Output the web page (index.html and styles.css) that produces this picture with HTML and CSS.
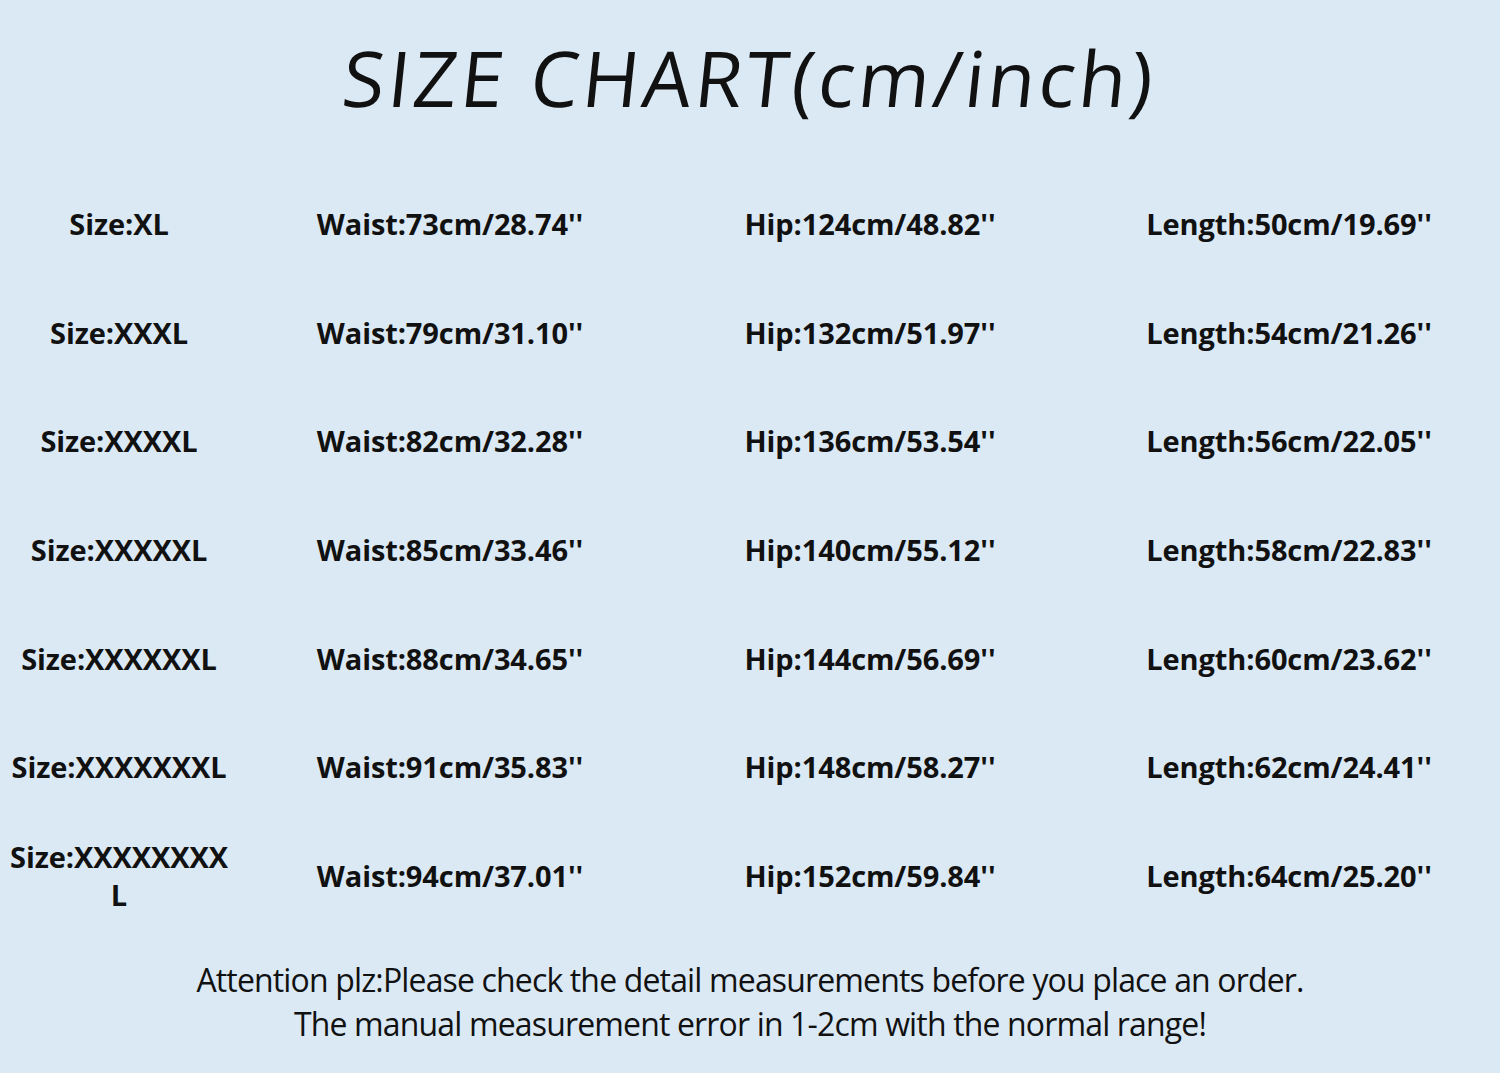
FILE: index.html
```html
<!DOCTYPE html>
<html>
<head>
<meta charset="utf-8">
<link rel="stylesheet" href="styles.css">
</head>
<body>
<div class="page">
  <h1 class="title"><span class="title-text">SIZE CHART(cm/inch)</span></h1>
  <div class="chart">
    <div class="cell size">Size:XL</div><div class="cell">Waist:73cm/28.74''</div><div class="cell">Hip:124cm/48.82''</div><div class="cell">Length:50cm/19.69''</div>
    <div class="cell size">Size:XXXL</div><div class="cell">Waist:79cm/31.10''</div><div class="cell">Hip:132cm/51.97''</div><div class="cell">Length:54cm/21.26''</div>
    <div class="cell size">Size:XXXXL</div><div class="cell">Waist:82cm/32.28''</div><div class="cell">Hip:136cm/53.54''</div><div class="cell">Length:56cm/22.05''</div>
    <div class="cell size">Size:XXXXXL</div><div class="cell">Waist:85cm/33.46''</div><div class="cell">Hip:140cm/55.12''</div><div class="cell">Length:58cm/22.83''</div>
    <div class="cell size">Size:XXXXXXL</div><div class="cell">Waist:88cm/34.65''</div><div class="cell">Hip:144cm/56.69''</div><div class="cell">Length:60cm/23.62''</div>
    <div class="cell size">Size:XXXXXXXL</div><div class="cell">Waist:91cm/35.83''</div><div class="cell">Hip:148cm/58.27''</div><div class="cell">Length:62cm/24.41''</div>
    <div class="cell size">Size:XXXXXXXX<br>L</div><div class="cell">Waist:94cm/37.01''</div><div class="cell">Hip:152cm/59.84''</div><div class="cell">Length:64cm/25.20''</div>
  </div>
  <div class="note">
    <p>Attention plz:Please check the detail measurements before you place an order.</p>
    <p>The manual measurement error in 1-2cm with the normal range!</p>
  </div>
</div>
</body>
</html>
```
FILE: styles.css
```css
html, body {
  margin: 0;
  padding: 0;
}
body {
  background: #dbe9f5;
  width: 1500px;
  height: 1073px;
  overflow: hidden;
}
.page {
  width: 1500px;
  height: 1073px;
  display: flex;
  flex-direction: column;
  color: #111;
}
.title {
  margin: 0;
  height: 170px;
  box-sizing: border-box;
  padding-top: 28px;
  text-align: center;
  font-family: "Open Sans", sans-serif;
  font-weight: 400;
  font-size: 77px;
  line-height: 100px;
  letter-spacing: 3.5px;
}
.title-text {
  display: inline-block;
  transform: skewX(-6deg);
}
.chart {
  display: grid;
  grid-template-columns: 238px 424px 416px 422px;
  grid-auto-rows: 108.6px;
  font-family: "Open Sans", sans-serif;
  font-weight: 700;
  font-size: 29px;
  letter-spacing: -0.1px;
}
.cell {
  display: flex;
  align-items: center;
  justify-content: center;
  text-align: center;
  line-height: 38px;
}
.note {
  padding-top: 28px;
  font-family: "Open Sans", sans-serif;
  font-weight: 400;
  font-size: 32px;
  text-align: center;
  letter-spacing: -0.85px;
}
.note p {
  margin: 0;
  line-height: 44px;
}
```
